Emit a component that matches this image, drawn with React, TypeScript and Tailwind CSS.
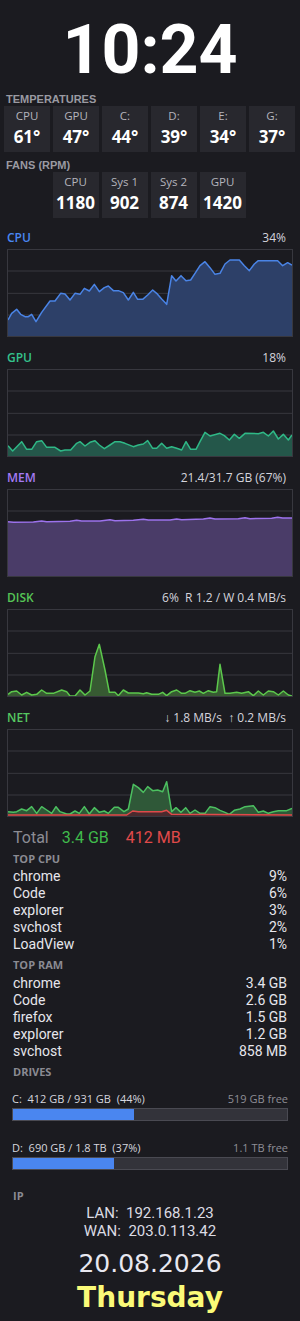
import React from "react";

type Pt = [number, number];

const CPU_PTS: Pt[] = [[24,285],[35,265],[50,253],[62,268],[75,275],[85,275],[95,268],[108,290],[125,262],[150,228],[165,228],[182,205],[195,207],[210,225],[225,205],[240,208],[253,190],[268,198],[283,178],[298,200],[313,188],[325,183],[340,197],[355,197],[370,203],[385,225],[400,202],[413,223],[428,223],[443,210],[458,195],[470,205],[485,222],[500,238],[515,152],[528,168],[543,152],[558,167],[572,165],[585,145],[600,122],[615,110],[630,128],[645,148],[660,145],[675,117],[690,105],[718,105],[733,122],[748,137],[763,117],[775,107],[833,107],[848,122],[863,113],[876,120]];

const GPU_PTS: Pt[] = [[24,302],[38,318],[65,290],[80,313],[95,313],[110,290],[125,287],[140,307],[165,307],[182,318],[195,315],[212,315],[230,295],[240,290],[255,303],[270,292],[285,287],[298,300],[313,311],[330,300],[345,290],[360,290],[375,295],[400,305],[415,300],[430,297],[443,287],[458,310],[470,310],[485,295],[500,310],[515,305],[530,310],[545,315],[558,290],[572,313],[588,313],[600,290],[615,262],[630,273],[660,265],[673,272],[688,285],[703,268],[718,280],[735,265],[775,266],[790,262],[805,273],[820,258],[835,282],[850,268],[865,285],[876,270]];

const MEM_PTS: Pt[] = [[24,170],[40,172],[100,171],[125,168],[140,170],[210,169],[230,166],[245,168],[300,168],[330,164],[345,167],[400,166],[430,163],[445,165],[510,165],[530,162],[545,164],[610,162],[630,159],[645,162],[715,161],[735,158],[750,161],[815,160],[833,157],[848,159],[876,159]];

const DISK_PTS: Pt[] = [[24,328],[35,320],[50,318],[65,330],[80,322],[95,330],[110,328],[125,315],[140,325],[160,325],[185,315],[200,320],[210,333],[225,333],[240,315],[255,330],[270,318],[285,215],[298,178],[315,255],[328,322],[345,322],[355,332],[370,315],[385,324],[415,324],[430,326],[440,323],[455,328],[475,328],[488,322],[500,332],[515,320],[530,315],[545,325],[555,325],[570,317],[585,322],[598,318],[610,325],[625,317],[640,322],[650,320],[660,238],[675,325],[690,325],[710,322],[725,325],[745,320],[760,332],[775,318],[790,330],[805,318],[820,320],[835,330],[850,318],[865,330],[876,333]];

const NET_DOWN: Pt[] = [[24,320],[40,322],[50,320],[65,312],[80,317],[95,305],[110,325],[125,305],[140,315],[155,325],[168,305],[180,320],[200,327],[210,327],[225,318],[238,325],[253,305],[268,327],[283,308],[298,322],[313,318],[325,325],[343,307],[355,307],[372,320],[385,312],[400,238],[415,248],[430,262],[443,245],[458,257],[473,255],[488,260],[500,230],[515,320],[528,308],[543,322],[557,308],[570,325],[585,315],[600,325],[615,325],[630,305],[645,308],[660,316],[675,322],[688,328],[703,316],[720,312],[735,305],[760,302],[775,322],[790,318],[805,325],[820,320],[835,317],[860,317],[876,310]];

const NET_UP: Pt[] = [[24,330],[380,330],[398,318],[415,320],[440,320],[485,320],[500,316],[515,328],[876,330]];

function linePath(p: Pt[]) {
  return p.map((q, i) => `${i ? "L" : "M"}${q[0]},${q[1]}`).join(" ");
}
function areaPath(p: Pt[]) {
  return `${linePath(p)} L${p[p.length - 1][0]},334 L${p[0][0]},334 Z`;
}

type Series = { pts: Pt[]; stroke: string; fill: string };

function Chart({ series }: { series: Series[] }) {
  return (
    <div className="mx-[7px] mt-[3px] h-[88px] border border-[#38383f]">
      <svg viewBox="24 75 852 258" preserveAspectRatio="none" className="block h-full w-full">
        {[138, 205, 270].map((y) => (
          <line key={y} x1={20} x2={880} y1={y} y2={y} stroke="#38383e" strokeWidth={1} vectorEffect="non-scaling-stroke" />
        ))}
        {series.map((s, i) => (
          <path key={"a" + i} d={areaPath(s.pts)} fill={s.fill} />
        ))}
        {series.map((s, i) => (
          <path key={"l" + i} d={linePath(s.pts)} fill="none" stroke={s.stroke} strokeWidth={1.5} strokeLinejoin="round" vectorEffect="non-scaling-stroke" />
        ))}
      </svg>
    </div>
  );
}

function Section({ label, color, value, series, first }: { label: string; color: string; value: string; series: Series[]; first?: boolean }) {
  return (
    <div className={first ? "mt-[12px]" : "mt-[13px]"}>
      <div className="flex h-[16px] items-center justify-between pl-[7px] pr-[14px] font-['Open_Sans',sans-serif] text-[12px] leading-[16px]">
        <span className={`font-semibold ${color}`}>{label}</span>
        <span className="whitespace-pre text-[#d4d4dc]">{value}</span>
      </div>
      <Chart series={series} />
    </div>
  );
}

function Box({ label, value }: { label: string; value: string }) {
  return (
    <div className="flex h-[46px] w-[46px] flex-col items-center bg-[#28282e] pt-[2px] font-['Open_Sans',sans-serif]">
      <div className="text-[11.5px] leading-[16px] text-[#b4b4bc]">{label}</div>
      <div className="mt-[2px] text-[17px] font-bold leading-[22px] text-white">{value}</div>
    </div>
  );
}

const H = "font-['Open_Sans',sans-serif] text-[11px] font-bold leading-[14px] text-[#8a8a92]";

function Row({ name, value }: { name: string; value: string }) {
  return (
    <div className="flex h-[17px] items-center justify-between text-[14px] leading-[17px] text-[#e6e6ec]">
      <span>{name}</span>
      <span>{value}</span>
    </div>
  );
}

function Drive({ text, free, pct, mt }: { text: string; free: string; pct: number; mt: string }) {
  return (
    <div className={mt}>
      <div className="flex justify-between font-['Open_Sans',sans-serif] text-[11px] leading-[14px]">
        <span className="whitespace-pre text-[#d6d6de]">{text}</span>
        <span className="text-[#8e8e96]">{free}</span>
      </div>
      <div className="mt-[2px] h-[13px] border border-[#4a4a52] bg-[#33333a]">
        <div className="h-full bg-[#4a86f0]" style={{ width: `${pct}%` }} />
      </div>
    </div>
  );
}

export default function App() {
  return (
    <div className="min-h-[1321px] w-[300px] overflow-hidden bg-[#1b1b20] font-['Roboto',sans-serif] text-white">
      <div className="pt-[16px] text-center text-[68px] font-bold leading-[68px] text-white">10:24</div>

      <div className="mt-[9px] pl-[6px] font-['Liberation_Sans',sans-serif] text-[11px] font-bold leading-[13px] text-[#9a9aa2]">TEMPERATURES</div>
      <div className="flex gap-[3px] pl-[4px]">
        <Box label="CPU" value="61°" />
        <Box label="GPU" value="47°" />
        <Box label="C:" value="44°" />
        <Box label="D:" value="39°" />
        <Box label="E:" value="34°" />
        <Box label="G:" value="37°" />
      </div>

      <div className="mt-[7px] pl-[6px] font-['Liberation_Sans',sans-serif] text-[11px] font-bold leading-[13px] text-[#9a9aa2]">FANS (RPM)</div>
      <div className="flex justify-center gap-[3px] pr-[2px]">
        <Box label="CPU" value="1180" />
        <Box label="Sys 1" value="902" />
        <Box label="Sys 2" value="874" />
        <Box label="GPU" value="1420" />
      </div>

      <Section first label="CPU" color="text-[#4a88f2]" value="34%" series={[{ pts: CPU_PTS, stroke: "#4a84e6", fill: "#2d4068" }]} />
      <Section label="GPU" color="text-[#34c28c]" value="18%" series={[{ pts: GPU_PTS, stroke: "#2fb886", fill: "#24574a" }]} />
      <Section label="MEM" color="text-[#a47af4]" value="21.4/31.7 GB (67%)" series={[{ pts: MEM_PTS, stroke: "#9c72ec", fill: "#4a3c68" }]} />
      <Section label="DISK" color="text-[#56c456]" value="6%  R 1.2 / W 0.4 MB/s" series={[{ pts: DISK_PTS, stroke: "#5cc84c", fill: "#375a32" }]} />
      <Section label="NET" color="text-[#56c860]" value="↓ 1.8 MB/s  ↑ 0.2 MB/s" series={[{ pts: NET_DOWN, stroke: "#4cc060", fill: "#2f5838" }, { pts: NET_UP, stroke: "#e04a4a", fill: "#4a2a2e" }]} />

      <div className="mt-[11px] flex pl-[13px] text-[16px] leading-[20px]">
        <span className="text-[#8c8c94]">Total</span>
        <span className="ml-[13px] text-[#40bc4c]">3.4 GB</span>
        <span className="ml-[17px] text-[#e04a4a]">412 MB</span>
      </div>

      <div className="px-[13px]">
        <div className={`mt-[4px] ${H}`}>TOP CPU</div>
        <div className="mt-[2px]">
          <Row name="chrome" value="9%" />
          <Row name="Code" value="6%" />
          <Row name="explorer" value="3%" />
          <Row name="svchost" value="2%" />
          <Row name="LoadView" value="1%" />
        </div>
        <div className={`mt-[5px] ${H}`}>TOP RAM</div>
        <div className="mt-[3px]">
          <Row name="chrome" value="3.4 GB" />
          <Row name="Code" value="2.6 GB" />
          <Row name="firefox" value="1.5 GB" />
          <Row name="explorer" value="1.2 GB" />
          <Row name="svchost" value="858 MB" />
        </div>
        <div className={`mt-[5px] ${H}`}>DRIVES</div>
      </div>

      <div className="px-[12px]">
        <Drive mt="mt-[13px]" text="C:  412 GB / 931 GB  (44%)" free="519 GB free" pct={44} />
        <Drive mt="mt-[20px]" text="D:  690 GB / 1.8 TB  (37%)" free="1.1 TB free" pct={37} />
      </div>

      <div className={`mt-[19px] pl-[13px] ${H}`}>IP</div>
      <div className="mt-[1px] text-center text-[15px] leading-[18px] text-[#dcdce4]">
        <div className="whitespace-pre">LAN:  192.168.1.23</div>
        <div className="whitespace-pre">WAN:  203.0.113.42</div>
      </div>
      <div className="mt-[8px] text-center font-['DejaVu_Sans',sans-serif] text-[25px] leading-[32px] text-[#e8e8f0]">20.08.2026</div>
      <div className="text-center font-['DejaVu_Sans',sans-serif] text-[28px] font-bold leading-[36px] text-[#fafa78]">Thursday</div>
    </div>
  );
}
